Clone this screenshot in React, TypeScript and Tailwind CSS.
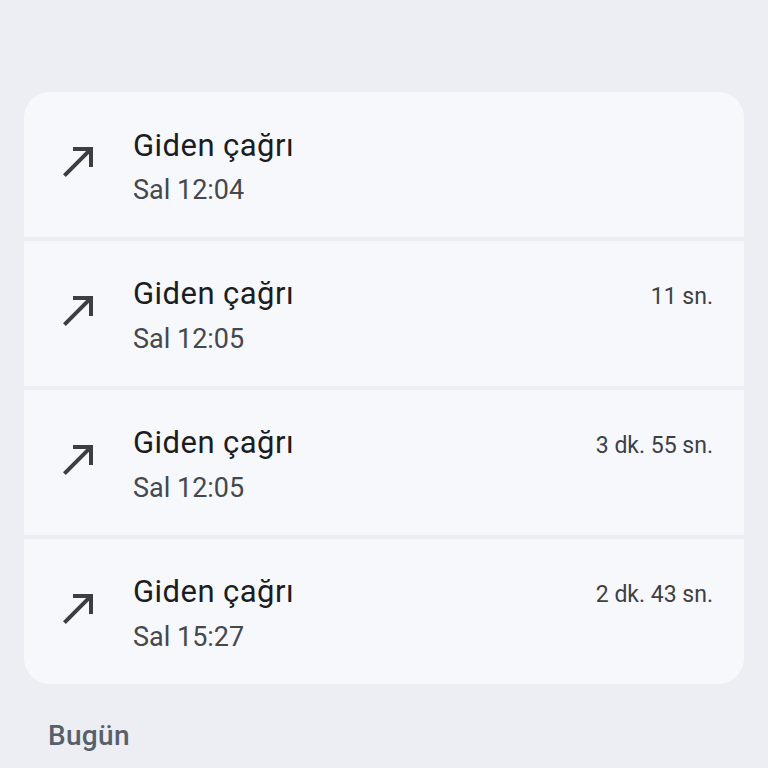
import { } from 'react'

const CALLS = [
  { time: 'Sal 12:04', dur: '' },
  { time: 'Sal 12:05', dur: '11 sn.' },
  { time: 'Sal 12:05', dur: '3 dk. 55 sn.' },
  { time: 'Sal 15:27', dur: '2 dk. 43 sn.' },
]

function CallMade() {
  return (
    <svg viewBox="0 0 24 24" className="mb-2 h-12 w-12 shrink-0 fill-[#3b3e43]">
      <path d="M9 5v2h6.59L4 18.59 5.41 20 17 8.41V15h2V5z" />
    </svg>
  )
}

export default function App() {
  return (
    <div className="min-h-[768px] bg-[#edeef3] pt-[92px] font-['Roboto','Noto_Sans',sans-serif]">
      <div className="mx-6 flex flex-col gap-1 overflow-hidden rounded-[26px]">
        {CALLS.map((c, i) => (
          <div key={i} className="flex h-[145px] items-center bg-[#f7f8fc] pl-[31px] pr-[31px]">
            <CallMade />
            <div className="ml-[30px] flex flex-1 flex-col pt-1">
              <div className="flex items-baseline">
                <span className="flex-1 text-[31px] leading-[40px] tracking-[0.45px] text-[#1c1d21]">Giden çağrı</span>
                {c.dur && <span className="text-[23px] text-[#3d4045]">{c.dur}</span>}
              </div>
              <span className="mt-1.5 text-[27px] leading-[36px] text-[#45484d]">{c.time}</span>
            </div>
          </div>
        ))}
      </div>
      <div className="px-12 pt-[31px] text-[28px] font-medium tracking-[0.3px] text-[#56606c]">Bugün</div>
    </div>
  )
}
